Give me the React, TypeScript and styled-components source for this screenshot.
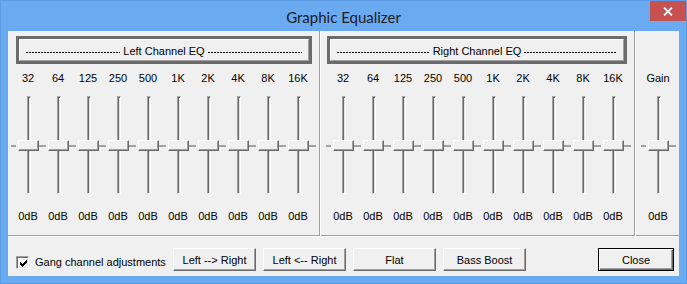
import React from 'react';
import styled, { createGlobalStyle } from 'styled-components';

const Global = createGlobalStyle`
  html, body { margin: 0; padding: 0; background: #6aaaf1; }
  body { font-family: "Liberation Sans", Arial, sans-serif; }
  * { box-sizing: border-box; }
`;

const Window = styled.div`
  position: relative;
  width: 687px;
  height: 284px;
  background: #6aaaf1;
  border: 1px solid #5b9be6;
  display: flex;
  flex-direction: column;
`;

const TitleBar = styled.div`
  height: 30px;
  display: flex;
  align-items: center;
  justify-content: center;
`;

const TitleText = styled.span`
  font-family: Lato, "Noto Sans", sans-serif;
  font-size: 15px;
  color: #1c1c1c;
  padding-top: 1px;
`;

const CloseBox = styled.div`
  position: absolute;
  top: 0;
  right: 0;
  width: 36px;
  height: 20px;
  background: #c75050;
  display: flex;
  align-items: center;
  justify-content: center;
`;

const Client = styled.div`
  margin: 0 7px 7px 7px;
  height: 245px;
  background: #f0f0f0;
  display: flex;
  flex-direction: column;
  font-size: 11px;
  color: #000;
`;

const PanelRow = styled.div`
  display: flex;
  height: 206px;
  border-bottom: 1px solid #fff;
  box-shadow: inset 0 -1px 0 #a0a0a0;
`;

const Panel = styled.div<{ $w: number; $pt: number; $pl: number; $last?: boolean }>`
  width: ${p => p.$w}px;
  padding-top: ${p => p.$pt}px;
  padding-left: ${p => p.$pl}px;
  display: flex;
  flex-direction: column;
  border-right: ${p => (p.$last ? 'none' : '1px solid #fff')};
  box-shadow: ${p => (p.$last ? 'none' : 'inset -1px 0 0 #a0a0a0')};
`;

const ChannelHeader = styled.div<{ $w: number; $ml: number }>`
  width: ${p => p.$w}px;
  margin-left: ${p => p.$ml}px;
  height: 28px;
  border: 3px solid #6b6b6b;
  display: flex;
`;

const HeaderFace = styled.div`
  flex: 1;
  display: flex;
  align-items: center;
  padding: 3px 6px 0 6px;
  border-style: solid;
  border-width: 1px;
  border-color: #fff #a0a0a0 #a0a0a0 #fff;
  background: #f0f0f0;
`;

const Dashes = styled.span`
  flex: 1;
  height: 1px;
  margin-top: 2px;
  background: repeating-linear-gradient(to right, #000 0 2px, transparent 2px 3px);
`;

const HeaderLabel = styled.span`
  padding: 0 3px;
  line-height: 13px;
  white-space: nowrap;
`;

const SliderRow = styled.div<{ $ml: number; $mt: number }>`
  display: flex;
  margin-left: ${p => p.$ml}px;
  margin-top: ${p => p.$mt}px;
`;

const SliderColumn = styled.div`
  width: 30px;
  display: flex;
  flex-direction: column;
  align-items: center;
`;

const ValueLabel = styled.div<{ $mt?: number }>`
  height: 13px;
  line-height: 13px;
  margin-top: ${p => p.$mt ?? 0}px;
  white-space: nowrap;
  text-align: center;
`;

const SliderArea = styled.div`
  position: relative;
  width: 30px;
  height: 114px;
  margin-top: 1px;
  display: flex;
  justify-content: center;
`;

const Track = styled.div`
  width: 4px;
  height: 98px;
  margin-top: 10px;
  margin-left: 1px;
  border-style: solid;
  border-width: 1px;
  border-color: #a0a0a0 #fff #fff #a0a0a0;
  box-shadow: inset 1px 1px 0 #696969, inset -1px -1px 0 #e3e3e3;
`;

const Tick = styled.div`
  position: absolute;
  top: 59px;
  left: -2px;
  width: 35px;
  height: 2px;
  background: #a0a0a0;
`;

const Thumb = styled.div`
  position: absolute;
  top: 54px;
  left: 5px;
  width: 21px;
  height: 11px;
  background: #f0f0f0;
  border-style: solid;
  border-width: 1px;
  border-color: #fff #696969 #696969 #fff;
  box-shadow: inset -1px -1px 0 #a0a0a0, -2px 0 0 #f0f0f0;
`;

const BottomBar = styled.div`
  flex: 1;
  display: flex;
  align-items: flex-start;
  padding: 11px 5px 0 8px;
`;

const CheckGroup = styled.label`
  width: 157px;
  height: 13px;
  margin-top: 8px;
  display: flex;
  align-items: center;
  gap: 6px;
`;

const CheckBox = styled.span`
  width: 13px;
  height: 13px;
  flex: none;
  background: #fff;
  border-style: solid;
  border-width: 1px;
  border-color: #a0a0a0 #fff #fff #a0a0a0;
  box-shadow: inset 1px 1px 0 #696969, inset -1px -1px 0 #e3e3e3;
  position: relative;
`;

const CheckMark = styled.svg`
  position: absolute;
  left: 2px;
  top: 2px;
`;

const CheckLabel = styled.span`
  line-height: 13px;
  white-space: nowrap;
`;

const PushButton = styled.button<{ $w: number; $default?: boolean }>`
  width: ${p => p.$w}px;
  height: 23px;
  margin-right: 7px;
  padding: 0;
  font-family: "Liberation Sans", Arial, sans-serif;
  font-size: 11px;
  color: #000;
  background: #f0f0f0;
  border-style: solid;
  border-width: 1px;
  border-color: ${p => (p.$default ? '#000' : '#fff #696969 #696969 #fff')};
  box-shadow: ${p =>
    p.$default
      ? 'inset 1px 1px 0 #fff, inset -1px -1px 0 #696969, inset -2px -2px 0 #a0a0a0'
      : 'inset -1px -1px 0 #a0a0a0'};
  ${p => (p.$default ? 'margin-left: auto; margin-right: 0;' : '')}
`;

const freqs = ['32', '64', '125', '250', '500', '1K', '2K', '4K', '8K', '16K'];

const Slider: React.FC<{ label: string }> = ({ label }) => (
  <SliderColumn>
    <ValueLabel>{label}</ValueLabel>
    <SliderArea>
      <Track />
      <Tick />
      <Thumb />
    </SliderArea>
    <ValueLabel $mt={10}>0dB</ValueLabel>
  </SliderColumn>
);

const checkTops = [2, 3, 4, 3, 2, 1, 0];

export default function App() {
  return (
    <>
      <Global />
      <Window>
        <TitleBar>
          <TitleText>Graphic Equalizer</TitleText>
        </TitleBar>
        <CloseBox>
          <svg width="10" height="9" viewBox="0 0 10 9">
            <path d="M1 0.5 L9 8.5 M9 0.5 L1 8.5" stroke="#fff" strokeWidth="1.8" fill="none" />
          </svg>
        </CloseBox>
        <Client>
          <PanelRow>
            <Panel $w={313} $pt={5} $pl={8}>
              <ChannelHeader $w={296} $ml={0}>
                <HeaderFace>
                  <Dashes />
                  <HeaderLabel>Left Channel EQ</HeaderLabel>
                  <Dashes />
                </HeaderFace>
              </ChannelHeader>
              <SliderRow $ml={-3} $mt={8}>
                {freqs.map(f => (
                  <Slider key={f} label={f} />
                ))}
              </SliderRow>
            </Panel>
            <Panel $w={315} $pt={5} $pl={6}>
              <ChannelHeader $w={300} $ml={0}>
                <HeaderFace>
                  <Dashes />
                  <HeaderLabel>Right Channel EQ</HeaderLabel>
                  <Dashes />
                </HeaderFace>
              </ChannelHeader>
              <SliderRow $ml={1} $mt={8}>
                {freqs.map(f => (
                  <Slider key={f} label={f} />
                ))}
              </SliderRow>
            </Panel>
            <Panel $w={43} $pt={41} $pl={7} $last>
              <SliderRow $ml={0} $mt={0}>
                <Slider label="Gain" />
              </SliderRow>
            </Panel>
          </PanelRow>
          <BottomBar>
            <CheckGroup>
              <CheckBox>
                <CheckMark width="9" height="9" viewBox="0 0 9 9" shapeRendering="crispEdges">
                  {checkTops.map((t, i) => (
                    <rect key={i} x={i + 1} y={t + 1} width="1" height="3" fill="#000" />
                  ))}
                </CheckMark>
              </CheckBox>
              <CheckLabel>Gang channel adjustments</CheckLabel>
            </CheckGroup>
            <PushButton $w={83}>Left --&gt; Right</PushButton>
            <PushButton $w={83}>Left &lt;-- Right</PushButton>
            <PushButton $w={83}>Flat</PushButton>
            <PushButton $w={83}>Bass Boost</PushButton>
            <PushButton $w={76} $default>Close</PushButton>
          </BottomBar>
        </Client>
      </Window>
    </>
  );
}
